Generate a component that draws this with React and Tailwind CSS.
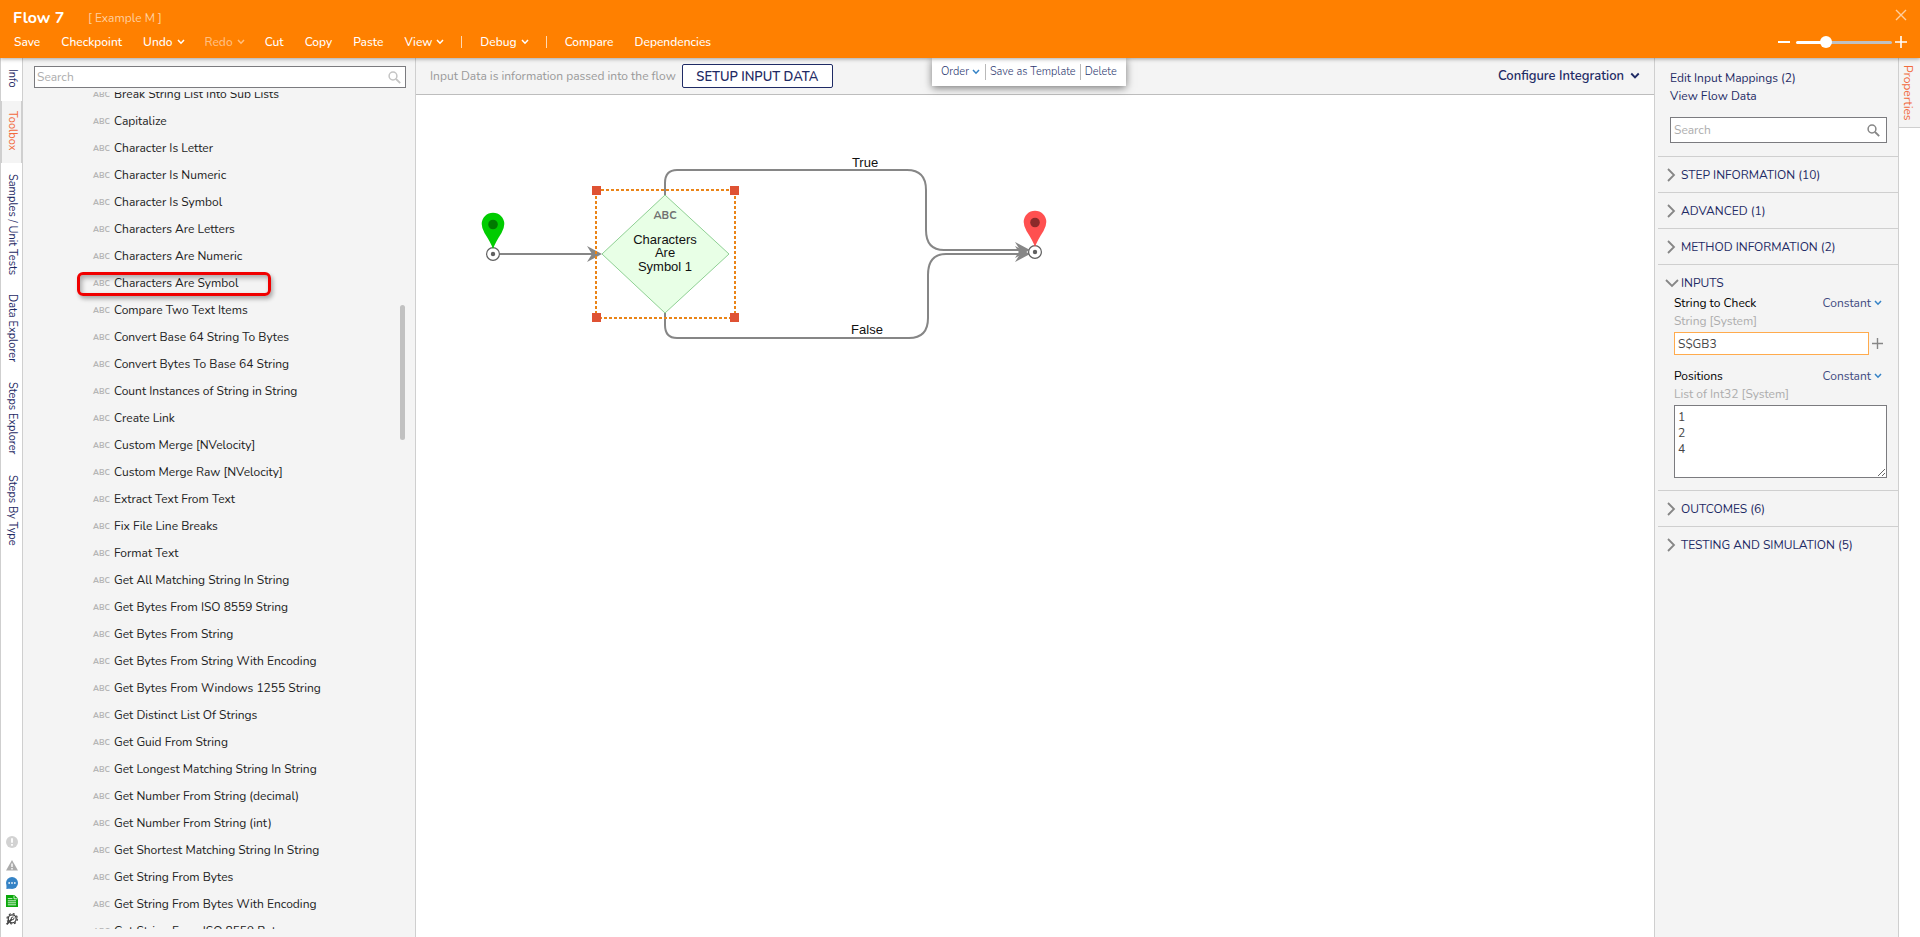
import React, { useState } from 'react'
import clsx from 'clsx'

const MENU = [
  { label: 'Save' },
  { label: 'Checkpoint' },
  { label: 'Undo', caret: true },
  { label: 'Redo', caret: true, disabled: true },
  { label: 'Cut' },
  { label: 'Copy' },
  { label: 'Paste' },
  { label: 'View', caret: true },
  { divider: true },
  { label: 'Debug', caret: true },
  { divider: true },
  { label: 'Compare' },
  { label: 'Dependencies' },
]

const SIDE_TABS = [
  { label: 'Info', height: 'h-[43px]' },
  { label: 'Toolbox', height: 'h-[62px]' },
  { label: 'Samples / Unit Tests', height: 'h-[120px]' },
  { label: 'Data Explorer', height: 'h-[88px]' },
  { label: 'Steps Explorer', height: 'h-[93px]' },
  { label: 'Steps By Type', height: 'h-[92px]' },
]

const STEPS = [
  'Break String List Into Sub Lists',
  'Capitalize',
  'Character Is Letter',
  'Character Is Numeric',
  'Character Is Symbol',
  'Characters Are Letters',
  'Characters Are Numeric',
  'Characters Are Symbol',
  'Compare Two Text Items',
  'Convert Base 64 String To Bytes',
  'Convert Bytes To Base 64 String',
  'Count Instances of String in String',
  'Create Link',
  'Custom Merge [NVelocity]',
  'Custom Merge Raw [NVelocity]',
  'Extract Text From Text',
  'Fix File Line Breaks',
  'Format Text',
  'Get All Matching String In String',
  'Get Bytes From ISO 8559 String',
  'Get Bytes From String',
  'Get Bytes From String With Encoding',
  'Get Bytes From Windows 1255 String',
  'Get Distinct List Of Strings',
  'Get Guid From String',
  'Get Longest Matching String In String',
  'Get Number From String (decimal)',
  'Get Number From String (int)',
  'Get Shortest Matching String In String',
  'Get String From Bytes',
  'Get String From Bytes With Encoding',
  'Get String From ISO 8559 Bytes',
]

function Caret({ className }) {
  return (
    <svg viewBox="0 0 8 6" className={clsx('shrink-0', className || 'h-[6px] w-[8px]')} fill="none" stroke="currentColor" strokeWidth="1.5">
      <path d="M1 1 L4 4.2 L7 1" />
    </svg>
  )
}

function SearchIcon({ className }) {
  return (
    <svg viewBox="0 0 13 13" className={clsx('h-[13px] w-[13px] shrink-0', className)} fill="none" stroke="currentColor">
      <circle cx="5" cy="5" r="3.9" strokeWidth="1.5" />
      <path d="M8 8 L12.2 12.2" strokeWidth="1.8" />
    </svg>
  )
}

function Header() {
  const [zoom, setZoom] = useState(29)

  return (
    <header className="relative z-20 flex h-[58px] shrink-0 flex-col bg-[#ff8000] text-white shadow-[0_1px_4px_rgba(0,0,0,0.35)]">
      <div className="flex h-[30px] items-center pl-[13px] pr-[13px]">
        <h1 className="mt-[5px] w-[75px] text-[16px] font-bold leading-5">Flow 7</h1>
        <span className="mt-[5px] text-[12px] leading-5 text-[#ffcf9f]">[ Example M ]</span>
        <button aria-label="Close" className="ml-auto text-[#ffcf9f]">
          <svg viewBox="0 0 12 12" className="h-[12px] w-[12px]" stroke="currentColor" strokeWidth="1.4">
            <path d="M1 1 L11 11 M11 1 L1 11" />
          </svg>
        </button>
      </div>
      <div className="flex h-6 items-center pl-[14px] pr-[13px]">
        <nav className="flex items-center gap-[21px] text-[12px] font-medium leading-5">
          {MENU.map((item, i) =>
            item.divider ? (
              <span key={i} className="-mx-[3px] h-3 w-px bg-[#ffd9b3]" />
            ) : (
              <button
                key={i}
                disabled={item.disabled}
                className={clsx('flex items-center gap-1', item.caret && '-mr-px', item.disabled && 'text-[#ffbf80]')}
              >
                {item.label}
                {item.caret && <Caret />}
              </button>
            )
          )}
        </nav>
        <div className="ml-auto flex items-center">
          <button aria-label="Zoom out" className="mr-[6px]">
            <svg viewBox="0 0 12 12" className="h-3 w-3" stroke="currentColor" strokeWidth="2">
              <path d="M0 6 H12" />
            </svg>
          </button>
          <input
            type="range"
            aria-label="Zoom"
            value={zoom}
            onChange={e => setZoom(e.target.value)}
            className="h-[3px] w-24 appearance-none rounded-full bg-[linear-gradient(to_right,#fff_31%,#c0c0c0_31%)] [&::-webkit-slider-thumb]:h-3 [&::-webkit-slider-thumb]:w-3 [&::-webkit-slider-thumb]:appearance-none [&::-webkit-slider-thumb]:rounded-full [&::-webkit-slider-thumb]:bg-white"
          />
          <button aria-label="Zoom in" className="ml-[3px]">
            <svg viewBox="0 0 12 12" className="h-3 w-3" stroke="currentColor" strokeWidth="1.6">
              <path d="M0 6 H12 M6 0 V12" />
            </svg>
          </button>
        </div>
      </div>
    </header>
  )
}

function StatusIcons() {
  return (
    <div className="mt-auto flex flex-col items-center gap-[6px] pb-3 pl-px">
      <svg viewBox="0 0 12 12" className="mb-[5px] h-3 w-3">
        <circle cx="6" cy="6" r="6" fill="#d2d2d2" />
        <path d="M6 2.2 V6.8 M6 8 V9.8" stroke="#fff" strokeWidth="1.8" />
      </svg>
      <svg viewBox="0 0 12 12" className="h-3 w-3">
        <path d="M6 1 L12 11.5 H0 Z" fill="#ababab" />
        <path d="M6 4.5 V8 M6 9 V10.4" stroke="#fff" strokeWidth="1.4" />
      </svg>
      <svg viewBox="0 0 12 12" className="h-3 w-3">
        <circle cx="6" cy="6" r="6" fill="#3583c6" />
        <path d="M0.5 8 L0.4 12 L5 11.6 Z" fill="#3583c6" />
        <path d="M2.4 6 H4 M5.2 6 H6.8 M8 6 H9.6" stroke="#fff" strokeWidth="1.4" />
      </svg>
      <svg viewBox="0 0 12 12" className="h-3 w-3">
        <path d="M0 0 H8.4 L12 3.4 V12 H0 Z" fill="#0aa80a" />
        <path d="M8 0.6 V3.8 H11.6" fill="none" stroke="#fff" strokeWidth="0.8" />
        <path d="M1.8 3.6 H6.4 M1.8 5.8 H10 M1.8 7.8 H10 M1.8 9.8 H10" stroke="#fff" strokeWidth="0.8" />
      </svg>
      <svg viewBox="0 0 12 12" className="h-3 w-3" fill="none" stroke="#404040">
        <circle cx="6.2" cy="5.8" r="4" strokeWidth="1.3" />
        <circle cx="6.2" cy="5.8" r="5.2" strokeWidth="1.2" strokeDasharray="2 2.08" />
        <path d="M0.6 11.4 L5.6 6.4" strokeWidth="1.8" />
        <path d="M5.2 6.8 L5.4 4.6 L7.4 3.8 M5.2 6.8 L7.4 6.6 L8.2 4.6" strokeWidth="1" />
      </svg>
    </div>
  )
}

function SideTabs() {
  return (
    <aside className="flex w-[23px] shrink-0 flex-col border-x border-[#cfcfcf] bg-white">
      {SIDE_TABS.map(tab => (
        <button
          key={tab.label}
          className={clsx(
            'flex shrink-0 items-center whitespace-nowrap pl-px text-[11px] leading-5 [writing-mode:vertical-rl]',
            tab.height,
            tab.label === 'Toolbox' ? 'border-y border-[#cfcfcf] bg-[#f4f4f4] pt-[10px] text-[#f26a3d]' : 'pt-[11px] text-[#1f2b65]'
          )}
        >
          {tab.label}
        </button>
      ))}
      <StatusIcons />
    </aside>
  )
}

function Toolbox() {
  return (
    <section className="relative flex w-[393px] shrink-0 flex-col border-r border-[#cfcfcf] bg-[#f4f4f4] pb-2 pt-2">
      <label className="ml-[11px] mr-[9px] flex h-[22px] shrink-0 items-center border border-[#7b7b7f] bg-white pl-[2px] pr-1">
        <input type="text" aria-label="Search toolbox" placeholder="Search" className="w-full text-[12px] leading-5 outline-none placeholder:text-[#adadad]" />
        <SearchIcon className="text-[#c4c4c4]" />
      </label>
      <div className="mt-1 min-h-0 flex-1 overflow-hidden">
        <ul className="-mt-3">
          {STEPS.map(step => (
            <li key={step} className="relative flex h-[27px] items-center gap-[5px] pl-[70px]">
              <span className="w-[16px] pt-[2px] text-[8px] font-bold leading-4 text-[#b5b5b5]">ABC</span>
              <span className="text-[12px] leading-5 text-[#222]">{step}</span>
              {step === 'Characters Are Symbol' && (
                <span className="absolute left-[54px] top-[3px] h-6 w-[194px] rounded-[6px] border-3 border-[#f00000] shadow-[2px_3px_4px_rgba(0,0,0,0.3),inset_2px_3px_5px_rgba(0,0,0,0.3)]" />
              )}
            </li>
          ))}
        </ul>
      </div>
      <span className="absolute right-[10px] top-[247px] h-[135px] w-[5px] rounded-full bg-[#c1c1c1]" />
    </section>
  )
}

function Pin({ x, y, fill, hole }) {
  return (
    <g transform={`translate(${x} ${y})`}>
      <circle r="6.4" fill="#fff" stroke="#606060" strokeWidth="1.2" />
      <circle r="2.2" fill="#606060" />
      <path d="M0 -5 Q-2 -11 -8.500 -21 Q-11.3 -26 -11.3 -30 A11.3 11.3 0 0 1 11.3 -30 Q11.3 -26 8.5 -21 Q2 -11 0 -5 Z" fill={fill} />
      <circle cy="-29.5" r="4.8" fill={hole} />
    </g>
  )
}

// Drawing units are pixels, with the origin at the canvas' top left corner
function FlowDiagram() {
  return (
    <svg width="760" height="300" viewBox="0 0 760 300" className="block font-['Liberation_Sans',Arial,sans-serif] text-[13px]">
      <g fill="none" stroke="#868686" strokeWidth="2">
        <path d="M84 159 H178" />
        <path d="M249 100 V88 Q249 75 261 75 H491 Q510 75 510 95 V135 Q510 155 528 155 H604" />
        <path d="M249 218 V230 Q249 243 261 243 H493 Q512 243 512 223 V180 Q512 159 530 159 H604" />
      </g>
      <g fill="#868686">
        <path d="M186 159 L171 151 L176 159 L171 167 Z" />
        <path d="M614 155 L599 147 L604 155 L599 163 Z" />
        <path d="M614 159 L599 151 L604 159 L599 167 Z" />
      </g>
      <path d="M249 100 L313 159 L249 218 L186 159 Z" fill="#e8ffe6" stroke="#8fd094" />
      <rect x="180" y="95" width="139" height="128" fill="none" stroke="#ea8418" strokeWidth="2" strokeDasharray="3 2" />
      <g fill="#df5233">
        <rect x="176" y="91" width="9" height="9" />
        <rect x="314" y="91" width="9" height="9" />
        <rect x="176" y="218" width="9" height="9" />
        <rect x="314" y="218" width="9" height="9" />
      </g>
      <g textAnchor="middle" fill="#111">
        <text x="249" y="124" fill="#707070" className="font-['Nunito','Open_Sans',sans-serif] text-[11px] font-bold">ABC</text>
        <text x="249" y="149">Characters</text>
        <text x="249" y="162">Are</text>
        <text x="249" y="176">Symbol 1</text>
        <text x="449" y="72">True</text>
        <text x="451" y="239">False</text>
      </g>
      <Pin x="77" y="159" fill="#00cc00" hole="#007a00" />
      <Pin x="619" y="157" fill="#ff5050" hole="#8b2a2a" />
    </svg>
  )
}

function Canvas() {
  return (
    <main className="relative flex min-w-0 flex-1 flex-col bg-white">
      <div className="flex h-[37px] shrink-0 items-center border-b border-[#bdbdbd] bg-[#f4f4f4] pl-[14px] pr-[14px]">
        <span className="text-[12px] leading-5 text-[#999]">Input Data is information passed into the flow</span>
        <button className="ml-[6px] h-6 w-[151px] rounded-[2px] border border-[#1f2b65] bg-white pt-px text-[13px] font-semibold leading-5 text-[#1f2b65]">
          SETUP INPUT DATA
        </button>
        <button className="ml-auto flex items-center gap-[6px] text-[13px] font-semibold leading-5 text-[#1f2b65]">
          Configure Integration
          <Caret className="h-[8px] w-[10px]" />
        </button>
      </div>
      <FlowDiagram />
      <div className="absolute left-[516px] top-0 z-10 flex h-7 items-center bg-white pl-[9px] pr-[9px] text-[11px] font-light leading-4 text-[#2c3870] shadow-[0_2px_8px_rgba(0,0,0,0.5)]">
        <button className="flex items-center gap-[3px] pr-[5px]">
          Order <Caret className="h-[6px] w-[8px] text-[#3583c6]" />
        </button>
        <button className="border-l border-[#b9b9b9] pl-1 pr-1">Save as Template</button>
        <button className="border-l border-[#b9b9b9] pl-1">Delete</button>
      </div>
    </main>
  )
}

function Section({ title, open, children }) {
  return (
    <section className="ml-[3px] border-t border-[#cfcfcf]">
      <button className="flex h-[35px] w-full items-center pl-[7px] text-[12px] leading-5 text-[#1f2b65]">
        <svg viewBox="0 0 14 14" className="mr-[2px] h-[14px] w-[14px]" fill="none" stroke="#868686" strokeWidth="1.8">
          {open ? <path d="M1 4 L7 10 L13 4" /> : <path d="M3 1 L9 7 L3 13" />}
        </svg>
        {title}
      </button>
      {children}
    </section>
  )
}

function InputHeader({ id, name, type }) {
  return (
    <>
      <div className="flex h-[18px] items-center justify-between pr-[5px]">
        <label htmlFor={id} className="text-black">{name}</label>
        <button className="flex items-center gap-[3px] text-[#3f4a80]">
          Constant <Caret className="h-[6px] w-[8px] text-[#3583c6]" />
        </button>
      </div>
      <p className="leading-[18px] text-[#adadad]">{type}</p>
    </>
  )
}

function Properties() {
  const [text, setText] = useState('S$GB3')
  const [positions, setPositions] = useState('1\n2\n4')

  return (
    <aside className="flex w-[245px] shrink-0 flex-col border-x border-[#cfcfcf] bg-[#f4f4f4] pt-[11px] text-[12px]">
      <div className="flex flex-col items-start pl-[15px] leading-[18px] text-[#1f2b65]">
        <a href="#mappings">Edit Input Mappings (2)</a>
        <a href="#data">View Flow Data</a>
      </div>
      <label className="mb-[13px] ml-[15px] mr-[11px] mt-3 flex h-[26px] shrink-0 items-center border border-[#7b7b7f] bg-white pl-[3px] pr-[6px]">
        <input type="text" aria-label="Search properties" placeholder="Search" className="w-full min-w-0 leading-5 outline-none placeholder:text-[#adadad]" />
        <SearchIcon className="text-[#868686]" />
      </label>
      <Section title="STEP INFORMATION (10)" />
      <Section title="ADVANCED (1)" />
      <Section title="METHOD INFORMATION (2)" />
      <Section title="INPUTS" open>
        <div className="-mt-[6px] flex flex-col pb-3 pl-4 pr-[11px]">
          <InputHeader id="string-to-check" name="String to Check" type="String [System]" />
          <div className="mb-3 mt-[2px] flex items-center gap-[3px]">
            <input
              id="string-to-check"
              type="text"
              value={text}
              onChange={e => setText(e.target.value)}
              className="h-[23px] min-w-0 flex-1 border border-[#ffab4d] bg-white px-[3px] text-[#444] outline-none"
            />
            <button aria-label="Add value" className="mr-1 text-[#868686]">
              <svg viewBox="0 0 11 11" className="h-[11px] w-[11px]" stroke="currentColor" strokeWidth="1.4">
                <path d="M0 5.5 H11 M5.5 0 V11" />
              </svg>
            </button>
          </div>
          <InputHeader id="positions" name="Positions" type="List of Int32 [System]" />
          <textarea
            id="positions"
            value={positions}
            onChange={e => setPositions(e.target.value)}
            className="mt-[2px] h-[73px] w-full border border-[#7b7b7f] bg-white px-[3px] py-[3px] leading-4 text-[#444] outline-none"
          />
        </div>
      </Section>
      <Section title="OUTCOMES (6)" />
      <Section title="TESTING AND SIMULATION (5)" />
    </aside>
  )
}

function App() {
  return (
    <div className="flex h-screen flex-col overflow-hidden bg-white font-['Nunito','Open_Sans',sans-serif]">
      <Header />
      <div className="flex min-h-0 flex-1">
        <SideTabs />
        <Toolbox />
        <Canvas />
        <Properties />
        <aside className="w-[21px] shrink-0 bg-white">
          <button className="flex h-[70px] w-full items-center border-b border-[#cfcfcf] bg-[#f4f4f4] pr-[3px] pt-[7px] text-[12px] leading-[18px] text-[#f26a3d] [writing-mode:vertical-rl]">
            Properties
          </button>
        </aside>
      </div>
    </div>
  )
}

export default App
